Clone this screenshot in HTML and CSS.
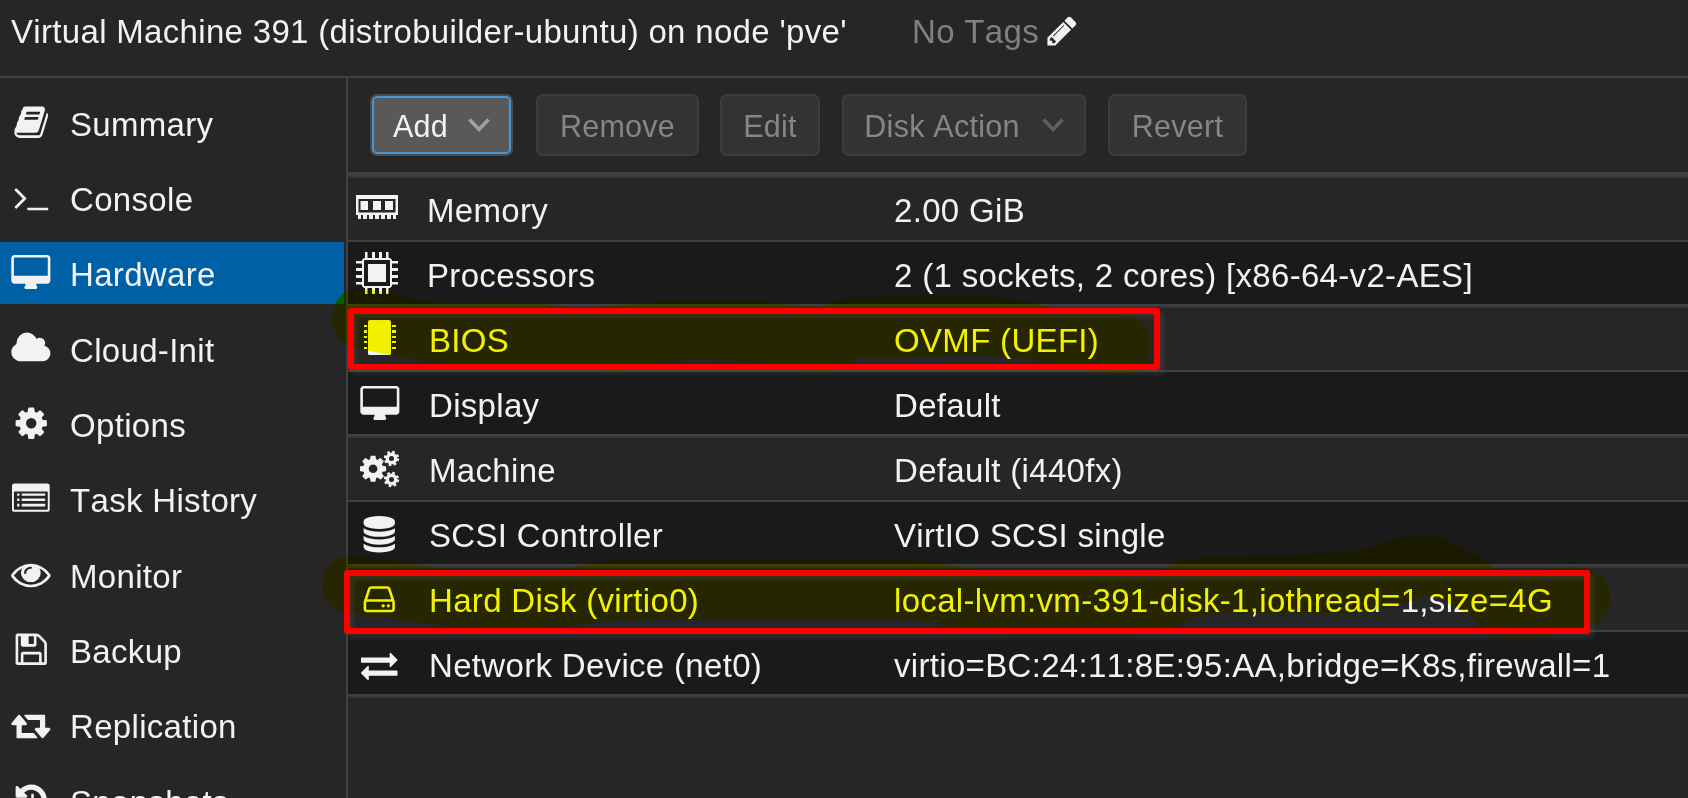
FILE: index.html
```html
<!DOCTYPE html>
<html lang="en">
<head>
<meta charset="utf-8">
<title>Virtual Machine 391</title>
<link rel="stylesheet" href="styles.css">
</head>
<body>
<svg class="defs" width="0" height="0">
  <symbol id="desktop" viewBox="0 0 2048 1792"><path d="M1856 992v-832q0-13-9.5-22.5t-22.5-9.5h-1600q-13 0-22.500 9.500t-9.500 22.500v832q0 13 9.500 22.500t22.500 9.500h1600q13 0 22.500-9.500t9.500-22.500zm128-832v1088q0 66-47 113t-113 47h-544q0 37 16 77.500t32 71 16 43.500q0 26-19 45t-45 19h-512q-26 0-45-19t-19-45q0-14 16-44t32-70 16-78h-544q-66 0-113-47t-47-113v-1088q0-66 47-113t113-47h1600q66 0 113 47t47 113z"/></symbol>
  <symbol id="cog" viewBox="0 0 1792 1792"><path d="M1152 896q0-106-75-181t-181-75-181 75-75 181 75 181 181 75 181-75 75-181zm512-109v222q0 12-8 23t-20 13l-185 28q-19 54-39 91 35 50 107 138 10 12 10 25t-9 23q-27 37-99 108t-94 71q-12 0-26-9l-138-108q-44 23-91 38-16 136-29 186-7 28-36 28h-222q-14 0-24.500-8.500t-11.500-21.500l-28-184q-49-16-90-37l-141 107q-10 9-25 9-14 0-25-11-126-114-165-168-7-10-7-23 0-12 8-23 15-21 51-66.500t54-70.500q-27-50-41-99l-183-27q-13-2-21-12.500t-8-23.500v-222q0-12 8-23t19-13l186-28q14-46 39-92-40-57-107-138-10-12-10-24 0-10 9-23 26-36 98.500-107.500t94.500-71.500q13 0 26 10l138 107q44-23 91-38 16-136 29-186 7-28 36-28h222q14 0 24.500 8.500t11.500 21.500l28 184q49 16 90 37l142-107q9-9 24-9 13 0 25 10 129 119 165 170 7 8 7 22 0 12-8 23-15 21-51 66.500t-54 70.500q26 50 41 98l183 28q13 2 21 12.500t8 23.500z"/></symbol>
</svg>

<header class="titlebar">
  <span class="vm-title">Virtual Machine 391 (distrobuilder-ubuntu) on node 'pve'</span>
  <span class="tags">No Tags</span>
  <svg class="pencil" viewBox="0 0 1792 1792"><path d="M491 1536l91-91-235-235-91 91v107h128v128h107zm523-928q0-22-22-22-10 0-17 7l-542 542q-7 7-7 17 0 22 22 22 10 0 17-7l542-542q7-7 7-17zm-54-192l416 416-832 832h-416v-416zm683 96q0 53-37 90l-166 166-416-416 166-165q36-38 90-38 53 0 91 38l235 234q37 39 37 91z"/></svg>
</header>

<div class="body">
  <nav class="sidebar">
    <a class="item"><span class="ico"><svg class="fa" viewBox="0 0 1792 1792"><path d="M1703 478q40 57 18 129l-275 906q-19 64-76.500 107.500t-122.500 43.500h-923q-77 0-148.500-53.500t-99.500-131.500q-24-67-2-127 0-4 3-27t4-37q1-8-3-21.500t-3-19.500q2-11 8-21t16.500-23.500 16.500-23.500q23-38 45-91.500t30-91.500q3-10 .5-30t-.5-28q3-11 17-28t17-23q21-36 42-92t25-90q1-9-2.500-32t.5-28q4-13 22-30.500t22-22.500q19-26 42.500-84.500t27.500-96.500q1-8-3-25.500t-2-26.500q2-8 9-18t18-23 17-21q8-12 16.500-30.500t15-35 16-36 19.500-32 26.500-23.500 36-11.500 47.500 5.500l-1 3q38-9 51-9h761q74 0 114 56t18 130l-274 906q-36 119-71.500 153.500t-128.500 34.500h-869q-27 0-38 15-11 16-1 43 24 70 144 70h923q29 0 56-15.500t35-41.500l300-987q7-22 5-57 38 15 59 43zm-1064 2q-4 13 2 22.500t20 9.500h608q13 0 25.500-9.500t16.500-22.500l21-64q4-13-2-22.500t-20-9.500h-608q-13 0-25.500 9.500t-16.500 22.500zm-83 256q-4 13 2 22.500t20 9.500h608q13 0 25.500-9.500t16.500-22.500l21-64q4-13-2-22.500t-20-9.500h-608q-13 0-25.500 9.500t-16.500 22.500z"/></svg></span><span>Summary</span></a>
    <a class="item"><span class="ico"><svg class="fa" viewBox="0 0 1792 1792"><path d="M649 983l-466 466q-10 10-23 10t-23-10l-50-50q-10-10-10-23t10-23l393-393-393-393q-10-10-10-23t10-23l50-50q10-10 23-10t23 10l466 466q10 10 10 23t-10 23zm1079 457v64q0 14-9 23t-23 9h-960q-14 0-23-9t-9-23v-64q0-14 9-23t23-9h960q14 0 23 9t9 23z"/></svg></span><span>Console</span></a>
    <a class="item active"><span class="ico"><svg class="fa wide"><use href="#desktop"/></svg></span><span>Hardware</span></a>
    <a class="item"><span class="ico"><svg class="fa wide" viewBox="0 0 2048 1792"><path d="M1984 1152q0 159-112.500 271.500t-271.500 112.500h-1088q-185 0-316.500-131.500t-131.500-316.500q0-132 71-241.500t187-163.500q-2-28-2-43 0-212 150-362t362-150q158 0 286.500 88t187.500 230q70-62 166-62 106 0 181 75t75 181q0 75-41 138 129 30 213 134.500t84 239.500z"/></svg></span><span>Cloud-Init</span></a>
    <a class="item"><span class="ico"><svg class="fa"><use href="#cog"/></svg></span><span>Options</span></a>
    <a class="item"><span class="ico"><svg class="fa wide" viewBox="0 0 2048 1792"><path fill-rule="evenodd" d="M224 128h1600q66 0 96 30t30 96v1132q0 66-30 96t-96 30h-1600q-66 0-96-30t-30-96v-1132q0-66 30-96t96-30zm0 384q-32 0-32 32v832q0 32 32 32h1600q32 0 32-32v-832q0-32-32-32zM352 608h112v112h-112zM576 608h1152v112h-1152zM352 864h112v112h-112zM576 864h1152v112h-1152zM352 1120h112v128h-112zM576 1120h1152v128h-1152z"/></svg></span><span>Task History</span></a>
    <a class="item"><span class="ico"><svg class="fa wide" viewBox="0 0 1792 1792" preserveAspectRatio="none"><path d="M1664 960q-152-236-381-353 61 104 61 225 0 185-131.500 316.500t-316.500 131.500-316.500-131.500-131.500-316.500q0-121 61-225-229 117-381 353 133 205 333.500 326.500t434.500 121.500 434.500-121.500 333.500-326.500zm-720-384q0-20-14-34t-34-14q-125 0-214.500 89.500t-89.500 214.500q0 20 14 34t34 14 34-14 14-34q0-86 61-147t147-61q20 0 34-14t14-34zm848 384q0 34-20 69-140 230-376.500 368.500t-499.500 138.500-499.500-139-376.500-368q-20-35-20-69t20-69q140-229 376.500-368t499.500-139 499.500 139 376.500 368q20 35 20 69z" transform="translate(45 0) scale(.95 1)"/></svg></span><span>Monitor</span></a>
    <a class="item"><span class="ico"><svg class="fa" viewBox="0 0 1792 1792"><path d="M512 1536h768v-384h-768v384zm896 0h128v-896q0-14-10-38.500t-20-34.500l-281-281q-10-10-34-20t-39-10v416q0 40-28 68t-68 28h-576q-40 0-68-28t-28-68v-416h-128v1280h128v-416q0-40 28-68t68-28h832q40 0 68 28t28 68v416zm-384-928v-320q0-13-9.500-22.500t-22.500-9.500h-192q-13 0-22.500 9.500t-9.500 22.500v320q0 13 9.500 22.500t22.500 9.500h192q13 0 22.500-9.500t9.500-22.500zm640 32v928q0 40-28 68t-68 28h-1344q-40 0-68-28t-28-68v-1344q0-40 28-68t68-28h928q40 0 88 20t76 48l280 280q28 28 48 76t20 88z"/></svg></span><span>Backup</span></a>
    <a class="item"><span class="ico"><svg class="fa wide" viewBox="0 0 2048 1792"><path d="M1344 1504q0 13-9.500 22.500t-22.500 9.500h-960q-8 0-13.500-2t-9-7-5.500-8-3-11.500-1-11.500v-600h-192q-26 0-45-19t-19-45q0-24 15-41l320-384q19-22 49-22t49 22l320 384q15 17 15 41 0 26-19 45t-45 19h-192v384h576q16 0 25 11l160 192q7 10 7 21zm640-416q0 24-15 41l-320 384q-20 23-49 23t-49-23l-320-384q-15-17-15-41 0-26 19-45t45-19h192v-384h-576q-16 0-25-12l-160-192q-7-9-7-20 0-13 9.500-22.500t22.500-9.500h960q8 0 13.500 2t9 7 5.500 8 3 11.500 1 11.500v600h192q26 0 45 19t19 45z"/></svg></span><span>Replication</span></a>
    <a class="item"><span class="ico"><svg class="fa" viewBox="0 0 1792 1792"><path d="M1664 896q0 156-61 298t-164 245-245 164-298 61q-172 0-327-72.500t-264-204.500q-7-10-6.500-22.500t8.500-20.500l137-138q10-9 25-9 16 2 23 12 73 95 179 147t225 52q104 0 198.500-40.500t163.500-109.500 109.500-163.500 40.500-198.500-40.500-198.500-109.500-163.500-163.500-109.500-198.500-40.500q-98 0-188 35.500t-160 101.500l137 138q31 30 14 69-17 40-59 40h-448q-26 0-45-19t-19-45v-448q0-42 40-59 39-17 69 14l130 129q107-101 244.500-156.500t284.500-55.500q156 0 298 61t245 164 164 245 61 298zm-640-288v448q0 14-9 23t-23 9h-320q-14 0-23-9t-9-23v-64q0-14 9-23t23-9h224v-352q0-14 9-23t23-9h64q14 0 23 9t9 23z"/></svg></span><span>Snapshots</span></a>
  </nav>

  <main class="main">
    <div class="toolbar">
      <button class="btn add"><span>Add</span><svg class="chev" viewBox="0 0 22 14"><path d="M1.500 1.500L11 11.500L20.500 1.500"/></svg></button>
      <button class="btn remove">Remove</button>
      <button class="btn edit">Edit</button>
      <button class="btn disk"><span>Disk Action</span><svg class="chev" viewBox="0 0 22 14"><path d="M1.500 1.500L11 11.500L20.500 1.500"/></svg></button>
      <button class="btn revert">Revert</button>
    </div>
    <div class="rows">
      <div class="row first"><span class="cell-ico"><svg class="mem" viewBox="0 0 42 24"><path fill-rule="evenodd" d="M0 0H42V20H0ZM2.500 4V17.500H39.500V4Z"/><path d="M4.500 6h7.500v9h-7.500zM17 6h8v9h-8zM29 6h8v9h-8zM2 20h3v4h-3zM7 20h4v4h-4zM13 20h4v4h-4zM19 20h4v4h-4zM25 20h4v4h-4zM31 20h4v4h-4zM37 20h3v4h-3z"/></svg></span><span class="txt">Memory</span><span class="txt">2.00 GiB</span></div>
      <div class="row dark first"><span class="cell-ico"><svg class="cpu" viewBox="0 0 42 42"><path fill-rule="evenodd" d="M8 6H34L36 8V34L34 36H8L6 34V8ZM8 8V34H34V8Z"/><path d="M12 12h18v18h-18zM9 0h2.500v6h-2.500zM16 0h3v6h-3zM23 0h3v6h-3zM30 0h2.500v6h-2.500zM9 36h2.500v6h-2.500zM16 36h3v6h-3zM23 36h3v6h-3zM30 36h2.500v6h-2.500zM0 9h6v2.500h-6zM0 16h6v3h-6zM0 23h6v3h-6zM0 30h6v2.500h-6zM36 9h6v2.500h-6zM36 16h6v3h-6zM36 23h6v3h-6zM36 30h6v2.500h-6z"/></svg></span><span class="txt">Processors</span><span class="txt">2 (1 sockets, 2 cores) [x86-64-v2-AES]</span></div>
      <div class="row"><span class="cell-ico"><svg class="chip" viewBox="0 0 32 35"><path d="M6 0h19q2 0 2 2v32q0 1-2 1H6q-2 0-2-1V2q0-2 2-2z"/><path d="M0 5h3v2h-3zM0 10h3v3h-3zM0 16h3v2h-3zM0 21h3v2h-3zM0 27h3v2h-3zM28 5h4v2h-4zM28 10h4v3h-4zM28 16h4v2h-4zM28 21h4v2h-4zM28 27h4v2h-4z"/></svg></span><span class="txt">BIOS</span><span class="txt">OVMF (UEFI)</span></div>
      <div class="row dark"><span class="cell-ico"><svg class="fa wide"><use href="#desktop"/></svg></span><span class="txt">Display</span><span class="txt">Default</span></div>
      <div class="row"><span class="cell-ico"><svg class="cogs" viewBox="0 0 40 36"><use href="#cog" x="-2.200" y="2.500" width="30.500" height="30.500"/><g class="ring"><circle cx="31.500" cy="7.500" r="4.200"/><circle cx="31.500" cy="28.500" r="4.200"/></g><g class="teeth"><circle cx="31.500" cy="7.500" r="6.300"/><circle cx="31.500" cy="28.500" r="6.300"/></g></svg></span><span class="txt">Machine</span><span class="txt">Default (i440fx)</span></div>
      <div class="row dark"><span class="cell-ico"><svg class="fa" viewBox="0 0 1792 1792"><path d="M896 768q237 0 443-43t325-127v170q0 69-103 128t-280 93.500-385 34.500-385-34.500-280-93.500-103-128v-170q119 84 325 127t443 43zm0 768q237 0 443-43t325-127v170q0 69-103 128t-280 93.500-385 34.500-385-34.500-280-93.500-103-128v-170q119 84 325 127t443 43zm0-384q237 0 443-43t325-127v170q0 69-103 128t-280 93.500-385 34.500-385-34.500-280-93.500-103-128v-170q119 84 325 127t443 43zm0-1152q208 0 385 34.500t280 93.500 103 128v128q0 69-103 128t-280 93.500-385 34.500-385-34.500-280-93.500-103-128v-128q0-69 103-128t280-93.500 385-34.500z"/></svg></span><span class="txt">SCSI Controller</span><span class="txt">VirtIO SCSI single</span></div>
      <div class="row"><span class="cell-ico"><svg class="fa" viewBox="0 0 1792 1792"><path d="M1168 1216q0 33-23.500 56.500t-56.500 23.500-56.500-23.500-23.500-56.500 23.500-56.500 56.500-23.500 56.500 23.500 23.500 56.500zm256 0q0 33-23.500 56.500t-56.500 23.500-56.500-23.500-23.500-56.500 23.500-56.500 56.500-23.500 56.500 23.500 23.500 56.500zm112 160v-320q0-13-9.500-22.500t-22.500-9.500h-1216q-13 0-22.500 9.500t-9.500 22.500v320q0 13 9.500 22.500t22.500 9.500h1216q13 0 22.500-9.500t9.500-22.500zm-1230-480h1180l-157-482q-4-13-16-21.500t-26-8.500h-782q-14 0-26 8.500t-16 21.500zm1358 160v320q0 66-47 113t-113 47h-1216q-66 0-113-47t-47-113v-320q0-25 16-75l197-606q17-53 63-86t101-33h782q55 0 101 33t63 86l197 606q16 50 16 75z"/></svg></span><span class="txt">Hard Disk (virtio0)</span><span class="txt">local-lvm:vm-391-disk-1,iothread=1,size=4G</span></div>
      <div class="row dark"><span class="cell-ico"><svg class="fa swap" viewBox="0 0 1792 1792"><path d="M1792 1184v192q0 13-9.500 22.500t-22.500 9.500h-1376v192q0 13-9.500 22.500t-22.500 9.500q-12 0-24-10l-319-320q-9-9-9-22 0-14 9-23l320-320q9-9 23-9 13 0 22.500 9.500t9.500 22.500v192h1376q13 0 22.500 9.500t9.500 22.500zm0-544q0 14-9 23l-320 320q-9 9-23 9-13 0-22.500-9.500t-9.500-22.500v-192h-1376q-13 0-22.500-9.500t-9.500-22.500v-192q0-13 9.500-22.500t22.500-9.500h1376v-192q0-14 9-23t23-9q12 0 24 10l319 319q9 9 9 23z"/></svg></span><span class="txt">Network Device (net0)</span><span class="txt">virtio=BC:24:11:8E:95:AA,bridge=K8s,firewall=1</span></div>
      <div class="row end"></div>
    </div>
  </main>
</div>

<svg class="marker" width="1688" height="798" viewBox="0 0 1688 798">
  <path d="M332 318Q334 294 353 289Q380 289 400 296Q425 303 455 303C500 302 530 301 570 307C620 308 650 300 690 300H750Q780 304 822 307Q836 299 850 298Q880 296 940 296Q1000 295 1030 302L1060 309L1120 314Q1138 317 1143 323Q1151 332 1151 345Q1148 375 1125 375Q1110 375 1085 369Q1030 357 985 356Q920 356 860 358Q852 358 842 366Q820 376 796 368Q760 359 690 360Q655 361 640 368Q610 375 582 366Q540 363 460 364Q430 363 400 357L350 347Q332 338 332 318Z"/>
  <path d="M322 586Q324 558 348 556Q365 556 380 559Q410 564 450 569H555Q580 567 600 562Q610 560 620 560H900Q930 560 975 570L1155 572Q1175 562 1195 559Q1220 555 1290 555Q1330 554 1365 549L1390 540Q1425 530 1448 541C1475 552 1490 565 1510 579Q1535 569 1570 567Q1600 566 1608 587Q1614 605 1603 618Q1590 630 1550 635Q1522 641 1504 639Q1482 634 1476 620Q1452 602 1425 595Q1395 610 1350 613H1225Q1195 614 1182 624Q1165 634 1130 635H1010Q960 632 935 622Q910 619 880 620H620Q605 620 595 623Q560 628 490 627Q430 626 395 619L355 614Q322 612 322 586Z"/>
</svg>
<div class="frame frame-bios"></div>
<div class="frame frame-disk"></div>
</body>
</html>
```
FILE: styles.css
```css
* { box-sizing: border-box; }
html, body { height: 100%; }
body {
  margin: 0;
  display: flex;
  flex-direction: column;
  overflow: hidden;
  position: relative;
  background: #262626;
  color: #f2f2f2;
  font-family: "Liberation Sans", Arial, sans-serif;
  font-size: 33px;
  font-kerning: none;
  letter-spacing: 0.320px;
  white-space: nowrap;
}
.defs { position: absolute; }
svg { display: block; fill: #f2f2f2; overflow: visible; flex: none; }

.titlebar {
  flex: none;
  height: 78px;
  border-bottom: 2px solid #404040;
  display: flex;
  align-items: flex-start;
  line-height: 36px;
  padding: 14px 0 0 11px;
}
.vm-title { width: 901px; }
.tags { width: 133px; color: #808080; }
.pencil { width: 34px; height: 34px; }

.body { flex: 1; min-height: 0; display: flex; }
.sidebar {
  width: 348px;
  flex: none;
  border-right: 2px solid #404040;
  padding: 13.400px 2px 0 0;
  overflow: hidden;
}
.item {
  display: flex;
  align-items: center;
  height: 62px;
  margin-bottom: 13.300px;
  padding-top: 5px;
}
.active { background: #0060a6; }
.ico { width: 62px; margin-right: 8px; display: flex; justify-content: center; margin-top: -5px; }
.fa { width: 36.500px; height: 36.500px; }
.fa.wide { width: 41.700px; }

.main { flex: 1; min-width: 0; display: flex; flex-direction: column; }
.toolbar {
  height: 98px;
  flex: none;
  border-bottom: 4px solid #404040;
  display: flex;
  padding: 16px 0 0 22px;
}
.btn {
  height: 62px;
  border: 2px solid #3d3d3d;
  border-radius: 7px;
  background: #333;
  color: #868686;
  font: inherit;
  font-size: 30.500px;
  letter-spacing: 0.250px;
  padding: 2px 0 0;
  display: flex;
  align-items: center;
  justify-content: center;
  gap: 22px;
  margin-right: 21px;
}
.add { width: 143px; margin-right: 23px; gap: 20px; color: #f2f2f2; background: #595959; box-shadow: inset 0 0 0 2px #4397d8; border-color: #4a4a4a; }
.remove { width: 163px; }
.edit { width: 100px; margin-right: 22px; }
.disk { width: 244px; margin-right: 22px; }
.revert { width: 139px; }
.chev { width: 22px; height: 14px; margin-top: -2px; fill: none; stroke: #606060; stroke-width: 3.500; }
.add .chev { stroke: #a0a0a0; }

.rows { flex: 1; }
.row {
  height: 66px;
  border-top: 2px solid #404040;
  display: grid;
  grid-template-columns: 81px 465px 1fr;
  align-items: center;
  box-shadow: inset 0 2px #363636;
  padding-top: 2px;
}
.row.dark { height: 64px; background: #1a1a1a; box-shadow: none; }
.row:first-child { border-top: 0; height: 64px; }
.row.first { grid-template-columns: 79px 467px 1fr; }
.row.first .cell-ico { width: 58px; }
.txt { padding-top: 4px; }
.cell-ico { width: 63px; display: flex; justify-content: center; }
.row.end { height: 100px; }
.mem { width: 42px; height: 24px; margin-top: -4px; }
.cpu { width: 42px; height: 42px; margin-top: -2px; }
.chip { width: 32px; height: 35px; margin-top: -4px; }
.cogs { width: 40px; height: 36px; }
.swap { margin-top: 2px; }
.ring { fill: none; stroke: #f2f2f2; stroke-width: 3.400; }
.teeth { fill: none; stroke: #f2f2f2; stroke-width: 2.800; stroke-dasharray: 2.500 2.448; }

/* Highlighter strokes and red frames lie over the table. */
.marker { position: absolute; left: 0; top: 0; mix-blend-mode: multiply; }
.marker path { fill: #ff0; }
.frame {
  position: absolute;
  border: 6px solid #f00;
  border-radius: 3px;
  box-shadow: 4px 4px 4px rgba(90, 90, 90, 0.300), inset 4px 4px 4px rgba(90, 90, 90, 0.250);
}
.frame-bios { left: 348px; top: 308px; width: 812px; height: 62px; }
.frame-disk { left: 344px; top: 570px; width: 1246px; height: 64px; }
```
